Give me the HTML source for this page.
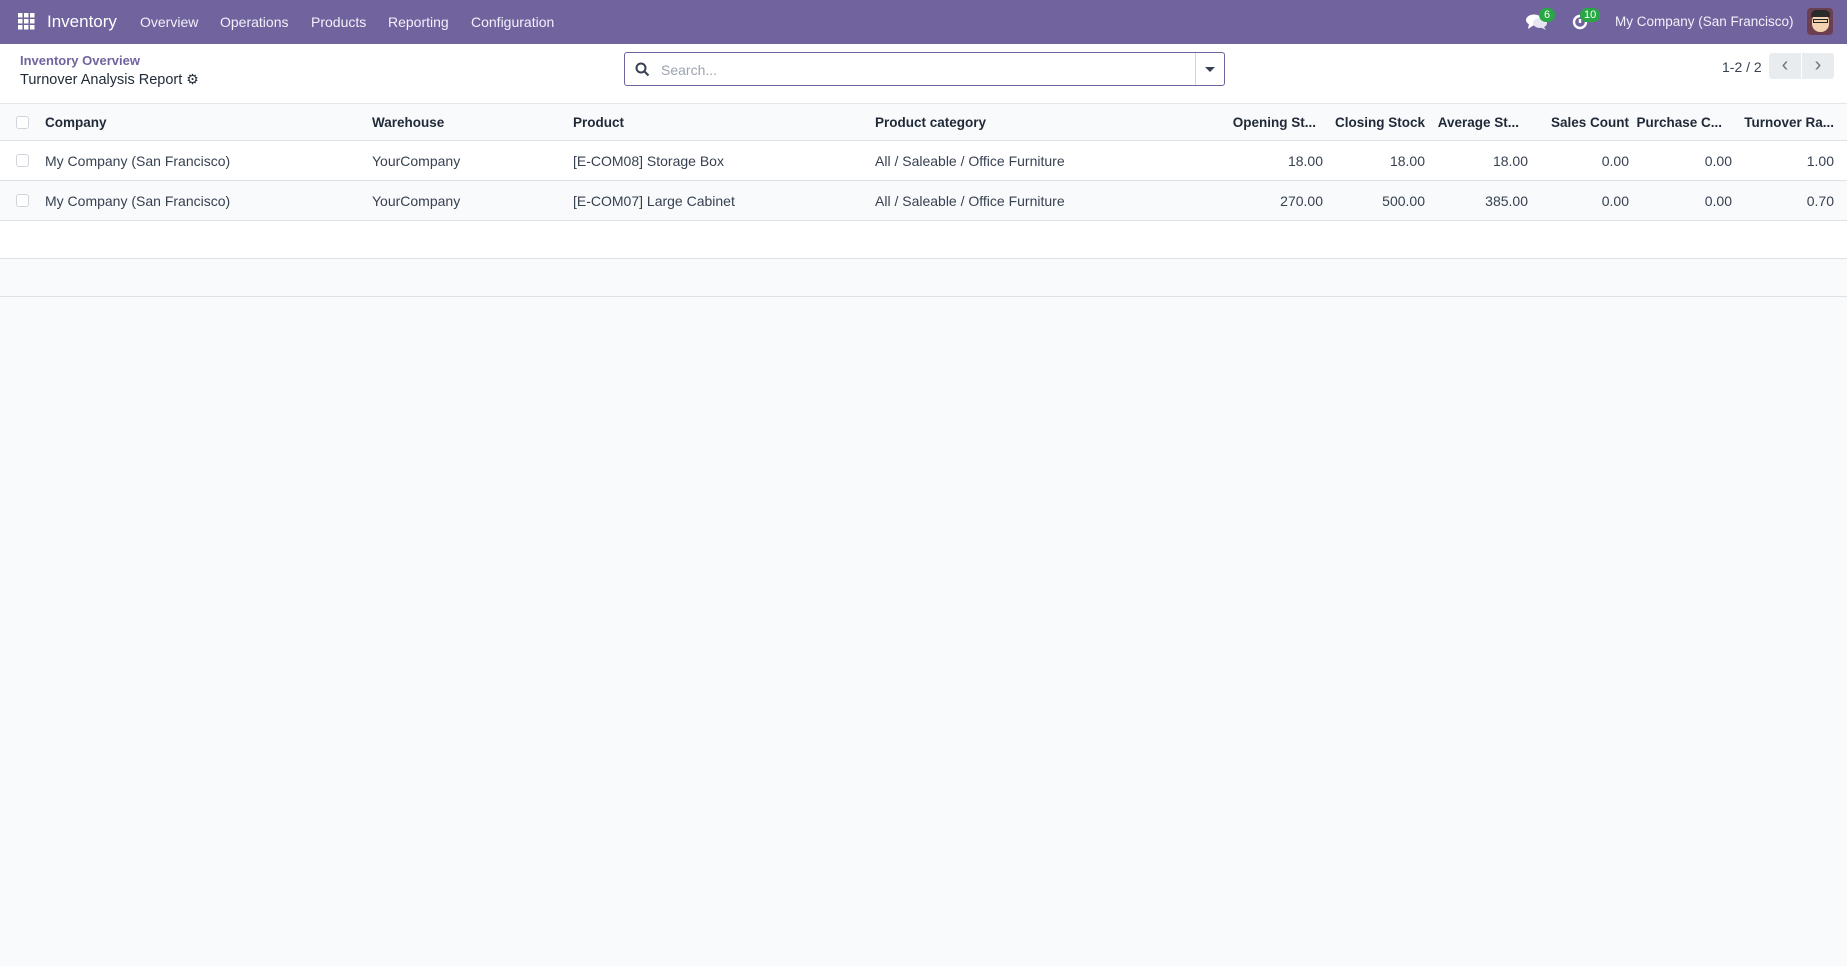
<!DOCTYPE html>
<html><head><meta charset="utf-8"><style>
*{box-sizing:border-box;margin:0;padding:0}
body{width:1847px;height:966px;background:#f9fafb;font-family:"Liberation Sans",sans-serif;color:#374151;position:relative;overflow:hidden;font-size:14px}
.nav{position:absolute;left:0;top:0;width:1847px;height:44px;background:#71639e;color:#fff}
.nav span{position:absolute;top:14px;font-size:14px;color:#f3f0fa}
.ab{position:absolute}
.cp{position:absolute;left:0;top:44px;width:1847px;height:60px;background:#fff;border-bottom:1px solid #e5e7eb}
.row{position:absolute;left:0;width:1847px;border-bottom:1px solid #dee2e6}
.cell{position:absolute;top:0;white-space:nowrap;font-size:14px}
.r{text-align:right}
.cb{position:absolute;left:16px;width:13px;height:13px;border:1px solid #d1d5db;border-radius:3px;background:#fff}
.h{font-weight:bold;color:#1f2937}
.h .cell{font-size:13.5px}
</style></head><body>
<div class="nav">
<svg class="ab" style="left:18px;top:13px" width="17" height="17" viewBox="0 0 17 17" fill="#fff"><rect x="0" y="0" width="4.5" height="4.5"/><rect x="6" y="0" width="4.5" height="4.5"/><rect x="12" y="0" width="4.5" height="4.5"/><rect x="0" y="6" width="4.5" height="4.5"/><rect x="6" y="6" width="4.5" height="4.5"/><rect x="12" y="6" width="4.5" height="4.5"/><rect x="0" y="12" width="4.5" height="4.5"/><rect x="6" y="12" width="4.5" height="4.5"/><rect x="12" y="12" width="4.5" height="4.5"/></svg>
<span style="left:47px;top:12px;font-size:17px;color:#fff">Inventory</span>
<span style="left:140px">Overview</span>
<span style="left:220px">Operations</span>
<span style="left:311px">Products</span>
<span style="left:388px">Reporting</span>
<span style="left:471px">Configuration</span>
<svg class="ab" style="left:1526px;top:13px" width="22" height="18" viewBox="0 0 22 18" fill="#fff"><ellipse cx="8" cy="7" rx="8" ry="5.5"/><path d="M3 11 L2 16 L8 12Z"/><ellipse cx="14" cy="10" rx="7" ry="5" fill="#e8e6f2"/><path d="M18 14 L20 17 L14 14Z" fill="#e8e6f2"/></svg>
<div class="ab" style="left:1539px;top:8px;background:#28a745;color:#fff;border-radius:8px;font-size:11px;padding:1px 5px">6</div>
<svg class="ab" style="left:1571px;top:13px" width="18" height="18" viewBox="0 0 18 18" fill="none" stroke="#fff" stroke-width="2.4"><path d="M15 9 A6 6 0 1 1 9 3"/><path d="M9 6 V10"/></svg>
<div class="ab" style="left:1580px;top:8px;background:#28a745;color:#fff;border-radius:8px;font-size:11px;padding:1px 4px">10</div>
<span style="left:1615px;font-size:13.5px">My Company (San Francisco)</span>
<div class="ab" style="left:1807px;top:8px;width:26px;height:27px;border-radius:4px;background:#6b3f4f;overflow:hidden"><div style="position:absolute;left:5px;top:5px;width:17px;height:19px;border-radius:8px;background:#f2d2b0"></div><div style="position:absolute;left:4px;top:2px;width:19px;height:7px;border-radius:5px 5px 0 0;background:#2a2a2a"></div><div style="position:absolute;left:6px;top:11px;width:15px;height:4px;border:1px solid #222"></div></div>
</div>
<div class="cp">
<div class="ab" style="left:20px;top:9px;font-size:13px;font-weight:bold;color:#71639e">Inventory Overview</div>
<div class="ab" style="left:20px;top:27px;font-size:14.5px;color:#1f2937">Turnover Analysis Report <span style="font-size:14px">⚙</span></div>
<div class="ab" style="left:624px;top:8px;width:601px;height:34px;border:1px solid #71639e;border-radius:3px;background:#fff">
<svg class="ab" style="left:10px;top:9px" width="15" height="15" viewBox="0 0 15 15" fill="none" stroke="#374151" stroke-width="2"><circle cx="6" cy="6" r="4.5"/><path d="M9.5 9.5 L13.5 13.5"/></svg>
<div class="ab" style="left:36px;top:9px;color:#9ca3af;font-size:14px">Search...</div>
<div class="ab" style="left:570px;top:0;width:1px;height:32px;background:#d1d5db"></div>
<div class="ab" style="left:580px;top:14px;border-left:5px solid transparent;border-right:5px solid transparent;border-top:5px solid #374151"></div>
</div>
<div class="ab" style="left:1722px;top:15px;font-size:14px">1-2 / 2</div>
<div class="ab" style="left:1769px;top:9px;width:32px;height:26px;background:#e9ecef;border-radius:3px 0 0 3px;color:#6b7280;text-align:center;font-size:20px;line-height:24px">‹</div>
<div class="ab" style="left:1802px;top:9px;width:32px;height:26px;background:#e9ecef;border-radius:0 3px 3px 0;color:#6b7280;text-align:center;font-size:20px;line-height:24px">›</div>
</div>
<div class="row h" style="top:104px;height:37px;background:#f9fafb">
<div class="cb" style="top:12px"></div>
<div class="cell" style="left:45px;top:11px">Company</div>
<div class="cell" style="left:372px;top:11px">Warehouse</div>
<div class="cell" style="left:573px;top:11px">Product</div>
<div class="cell" style="left:875px;top:11px">Product category</div>
<div class="cell r" style="right:531px;top:11px">Opening St...</div>
<div class="cell r" style="right:422px;top:11px">Closing Stock</div>
<div class="cell r" style="right:328px;top:11px">Average St...</div>
<div class="cell r" style="right:218px;top:11px">Sales Count</div>
<div class="cell r" style="right:125px;top:11px">Purchase C...</div>
<div class="cell r" style="right:13px;top:11px">Turnover Ra...</div>
</div>
<div class="row" style="top:141px;height:40px;background:#fff">
<div class="cb" style="top:13px"></div>
<div class="cell" style="left:45px;top:12px">My Company (San Francisco)</div>
<div class="cell" style="left:372px;top:12px">YourCompany</div>
<div class="cell" style="left:573px;top:12px">[E-COM08] Storage Box</div>
<div class="cell" style="left:875px;top:12px">All / Saleable / Office Furniture</div>
<div class="cell r" style="right:524px;top:12px">18.00</div>
<div class="cell r" style="right:422px;top:12px">18.00</div>
<div class="cell r" style="right:319px;top:12px">18.00</div>
<div class="cell r" style="right:218px;top:12px">0.00</div>
<div class="cell r" style="right:115px;top:12px">0.00</div>
<div class="cell r" style="right:13px;top:12px">1.00</div>
</div>
<div class="row" style="top:181px;height:40px;background:#f9fafb">
<div class="cb" style="top:13px"></div>
<div class="cell" style="left:45px;top:12px">My Company (San Francisco)</div>
<div class="cell" style="left:372px;top:12px">YourCompany</div>
<div class="cell" style="left:573px;top:12px">[E-COM07] Large Cabinet</div>
<div class="cell" style="left:875px;top:12px">All / Saleable / Office Furniture</div>
<div class="cell r" style="right:524px;top:12px">270.00</div>
<div class="cell r" style="right:422px;top:12px">500.00</div>
<div class="cell r" style="right:319px;top:12px">385.00</div>
<div class="cell r" style="right:218px;top:12px">0.00</div>
<div class="cell r" style="right:115px;top:12px">0.00</div>
<div class="cell r" style="right:13px;top:12px">0.70</div>
</div>
<div class="row" style="top:221px;height:38px;background:#fff"></div>
<div class="row" style="top:259px;height:38px;background:#f9fafb"></div>
</body></html>
